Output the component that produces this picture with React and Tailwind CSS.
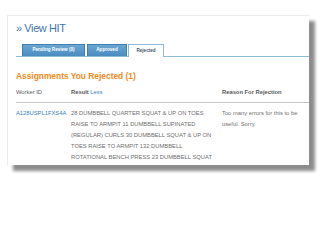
export default function App() {
  const font = { fontFamily: '"Liberation Sans", Arial, sans-serif' };

  return (
    <div className="w-[320px] h-[240px] bg-white overflow-hidden pt-[15px] pl-[7px]" style={font}>
      <div className="w-[302px] h-[150px] bg-white border-l border-t border-[#ececec] pl-[8px] pt-[6px] shadow-[6px_6px_3px_rgba(0,0,0,0.45)]">
        <div className="text-[11px] leading-[13px] text-[#4177aa] tracking-[-0.4px]">» View HIT</div>

        <div className="mt-[9px] flex items-end h-[13px] border-b border-[#8fbbd9] pl-[6px]">
          <div className="w-[63px] h-[12px] mr-[2px] rounded-t-[1px] border border-b-0 border-[#3f7fb2] bg-gradient-to-b from-[#6aa6d2] to-[#4a8bc0] text-white text-[4.6px] font-bold flex items-center justify-center">
            Pending Review (0)
          </div>
          <div className="w-[40px] h-[12px] mr-[1px] rounded-t-[1px] border border-b-0 border-[#3f7fb2] bg-gradient-to-b from-[#6aa6d2] to-[#4a8bc0] text-white text-[4.6px] font-bold flex items-center justify-center">
            Approved
          </div>
          <div className="w-[36px] h-[13px] -mb-px rounded-t-[1px] border border-b-0 border-[#8fbbd9] bg-white text-[#4a5a6a] text-[4.6px] font-bold flex items-center justify-center">
            Rejected
          </div>
        </div>

        <div className="mt-[14px] text-[8.4px] leading-[10px] font-bold text-[#f08a1c]">
          Assignments You Rejected (1)
        </div>

        <div className="mt-[6px] flex text-[5.8px] leading-[11px] text-[#5a5a5a] border-b border-[#c4c4c4] pb-[4px]">
          <div className="w-[55px]">Worker ID</div>
          <div className="w-[151px] font-bold">
            Result <span className="font-normal text-[#3a7fc0]">Less</span>
          </div>
          <div className="font-bold">Reason For Rejection</div>
        </div>

        <div className="mt-[5px] flex text-[5.8px] leading-[11px] text-[#707070]">
          <div className="w-[55px] text-[#3a7fc0] whitespace-nowrap">A128USPL1FXS4A</div>
          <div className="w-[151px] whitespace-nowrap">
            28 DUMBBELL QUARTER SQUAT &amp; UP ON TOES
            <br />
            RAISE TO ARMPIT 11 DUMBBELL SUPINATED
            <br />
            (REGULAR) CURLS 30 DUMBBELL SQUAT &amp; UP ON
            <br />
            TOES RAISE TO ARMPIT 132 DUMBBELL
            <br />
            ROTATIONAL BENCH PRESS 23 DUMBBELL SQUAT
          </div>
          <div className="whitespace-nowrap">
            Too many errors for this to be
            <br />
            useful. Sorry.
          </div>
        </div>
      </div>
    </div>
  );
}
